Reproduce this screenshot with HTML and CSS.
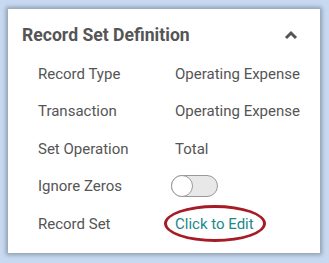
FILE: index.html
```html
<!DOCTYPE html>
<html lang="en">
<head>
    <meta charset="UTF-8">
    <title>Record Set Definition</title>
    <link rel="stylesheet" href="styles.css">
</head>
<body>
    <div class="card">
        <div class="card-header">
            <h2>Record Set Definition</h2>
            <svg class="caret" width="14" height="10" viewBox="0 0 14 10">
                <path d="M2 8 L7 3 L12 8" fill="none" stroke="#555" stroke-width="3"/>
            </svg>
        </div>
        <div class="rows">
            <div class="row">
                <span class="label">Record Type</span>
                <span class="value">Operating Expense</span>
            </div>
            <div class="row">
                <span class="label">Transaction</span>
                <span class="value">Operating Expense</span>
            </div>
            <div class="row">
                <span class="label">Set Operation</span>
                <span class="value">Total</span>
            </div>
            <div class="row">
                <span class="label">Ignore Zeros</span>
                <span class="value"><span class="toggle"><span class="knob"></span></span></span>
            </div>
            <div class="row">
                <span class="label">Record Set</span>
                <span class="value"><a class="edit-link" href="#">Click to Edit</a></span>
            </div>
        </div>
    </div>
</body>
</html>
```

FILE: styles.css
```css
body {
    margin: 0;
    padding: 9px 9px 10px 8px;
    background-color: #c6d9f1;
    font-family: Roboto, "Noto Sans", sans-serif;
    color: #555;
}

.card {
    background-color: white;
    box-shadow: 0 0 4px 2px rgba(0, 0, 0, 0.28);
    height: 244px;
    box-sizing: border-box;
    padding: 15px 14px 0 14px;
}

.card-header {
    display: flex;
    justify-content: space-between;
    align-items: center;
    height: 22px;
}

.card-header h2 {
    margin: 0;
    font-size: 17.6px;
    font-weight: 700;
    color: #555;
}

.caret {
    margin-right: 8px;
}

.rows {
    padding: 9px 0 0 16px;
}

.row {
    display: flex;
    align-items: center;
    height: 37.5px;
    font-size: 15px;
}

.label {
    width: 137px;
}

.value {
    display: flex;
    align-items: center;
}

.toggle {
    position: relative;
    display: inline-block;
    width: 45px;
    height: 20px;
    margin-left: -4px;
    border: 1px solid #999;
    border-radius: 11px;
    background-color: #e8e8e8;
}

.knob {
    position: absolute;
    left: -1px;
    top: -1px;
    width: 20px;
    height: 20px;
    border: 1px solid #999;
    border-radius: 50%;
    background-color: white;
}

.edit-link {
    position: relative;
    color: #1c8a8a;
    text-decoration: none;
}

.edit-link::after {
    content: "";
    position: absolute;
    left: -11px;
    right: -12px;
    top: -10px;
    bottom: -9px;
    border: 3px solid #a61c26;
    border-radius: 50%;
}
```
